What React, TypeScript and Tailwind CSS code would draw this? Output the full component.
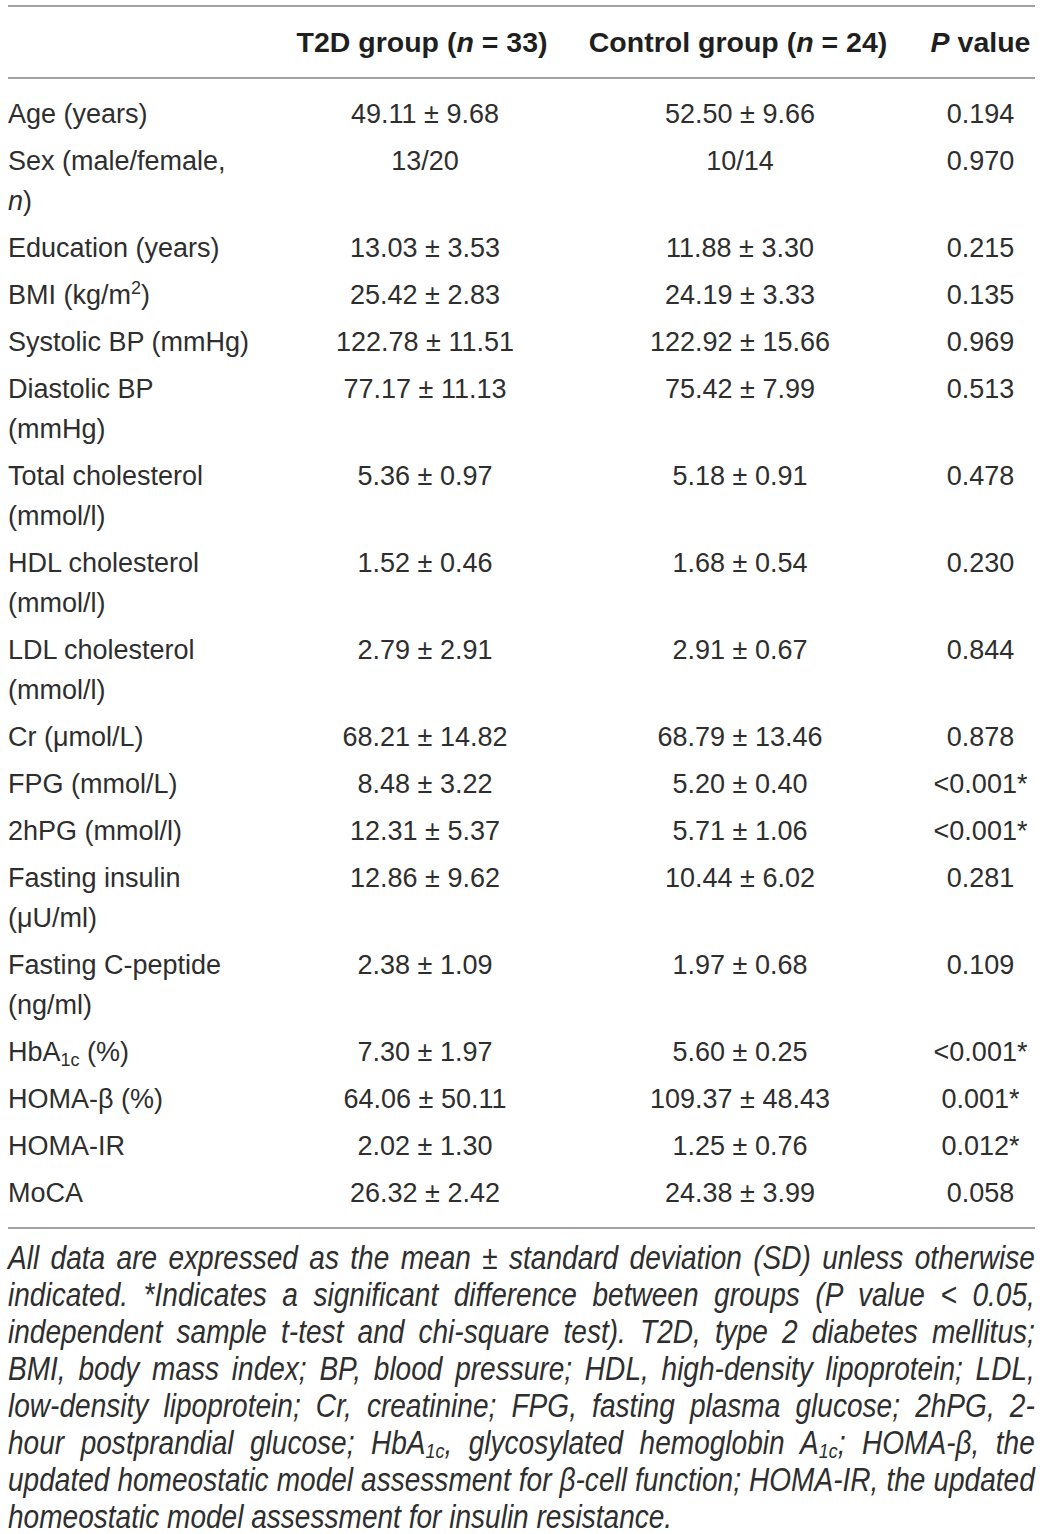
import React from "react";

type Row = { label: React.ReactNode; a: string; b: string; p: string };

const Sub = ({ children }: { children: React.ReactNode }) => (
  <sub className="text-[18px] leading-none relative top-[5px] bottom-auto">{children}</sub>
);

const rows: Row[] = [
  { label: "Age (years)", a: "49.11 ± 9.68", b: "52.50 ± 9.66", p: "0.194" },
  { label: <>Sex (male/female,<br /><i>n</i>)</>, a: "13/20", b: "10/14", p: "0.970" },
  { label: "Education (years)", a: "13.03 ± 3.53", b: "11.88 ± 3.30", p: "0.215" },
  { label: <>BMI (kg/m<sup className="text-[18px] leading-none relative top-[-10px]">2</sup>)</>, a: "25.42 ± 2.83", b: "24.19 ± 3.33", p: "0.135" },
  { label: "Systolic BP (mmHg)", a: "122.78 ± 11.51", b: "122.92 ± 15.66", p: "0.969" },
  { label: <>Diastolic BP<br />(mmHg)</>, a: "77.17 ± 11.13", b: "75.42 ± 7.99", p: "0.513" },
  { label: <>Total cholesterol<br />(mmol/l)</>, a: "5.36 ± 0.97", b: "5.18 ± 0.91", p: "0.478" },
  { label: <>HDL cholesterol<br />(mmol/l)</>, a: "1.52 ± 0.46", b: "1.68 ± 0.54", p: "0.230" },
  { label: <>LDL cholesterol<br />(mmol/l)</>, a: "2.79 ± 2.91", b: "2.91 ± 0.67", p: "0.844" },
  { label: "Cr (μmol/L)", a: "68.21 ± 14.82", b: "68.79 ± 13.46", p: "0.878" },
  { label: "FPG (mmol/L)", a: "8.48 ± 3.22", b: "5.20 ± 0.40", p: "<0.001*" },
  { label: "2hPG (mmol/l)", a: "12.31 ± 5.37", b: "5.71 ± 1.06", p: "<0.001*" },
  { label: <>Fasting insulin<br />(μU/ml)</>, a: "12.86 ± 9.62", b: "10.44 ± 6.02", p: "0.281" },
  { label: <>Fasting C-peptide<br />(ng/ml)</>, a: "2.38 ± 1.09", b: "1.97 ± 0.68", p: "0.109" },
  { label: <>HbA<Sub>1c</Sub> (%)</>, a: "7.30 ± 1.97", b: "5.60 ± 0.25", p: "<0.001*" },
  { label: "HOMA-β (%)", a: "64.06 ± 50.11", b: "109.37 ± 48.43", p: "0.001*" },
  { label: "HOMA-IR", a: "2.02 ± 1.30", b: "1.25 ± 0.76", p: "0.012*" },
  { label: "MoCA", a: "26.32 ± 2.42", b: "24.38 ± 3.99", p: "0.058" },
];

const FSub = ({ children }: { children: React.ReactNode }) => (
  <sub className="text-[21px] leading-none relative top-[4px] bottom-auto">{children}</sub>
);

const footLines: React.ReactNode[] = [
  "All data are expressed as the mean ± standard deviation (SD) unless otherwise",
  "indicated. *Indicates a significant difference between groups (P value < 0.05,",
  "independent sample t-test and chi-square test). T2D, type 2 diabetes mellitus;",
  "BMI, body mass index; BP, blood pressure; HDL, high-density lipoprotein; LDL,",
  "low-density lipoprotein; Cr, creatinine; FPG, fasting plasma glucose; 2hPG, 2-",
  <>hour postprandial glucose; HbA<FSub>1c</FSub>, glycosylated hemoglobin A<FSub>1c</FSub>; HOMA-β, the</>,
  "updated homeostatic model assessment for β-cell function; HOMA-IR, the updated",
];

export default function App() {
  return (
    <div
      className="w-[1043px] bg-white text-[#2e2e2e] px-[8px]"
      style={{ fontFamily: "'Liberation Sans', Arial, sans-serif" }}
    >
      <div className="h-[5px]" />
      <div className="border-t-2 border-[#a3a3a3]" />
      <div className="grid grid-cols-[282px_270px_360px_1fr] h-[70px] items-center text-[28.5px] font-bold whitespace-nowrap text-[#1f1f1f]">
        <div />
        <div className="text-center pr-[6px]">T2D group (<i>n</i> = 33)</div>
        <div className="text-center pr-[4px]">Control group (<i>n</i> = 24)</div>
        <div className="text-center pl-[6px]"><i>P</i> value</div>
      </div>
      <div className="border-t-2 border-[#a3a3a3]" />
      <div className="pt-[11px] pb-[11px] text-[27px] leading-[40px] whitespace-nowrap">
        {rows.map((r, i) => (
          <div key={i} className="grid grid-cols-[282px_270px_360px_1fr] pt-[4px] pb-[3px]">
            <div>{r.label}</div>
            <div className="text-center">{r.a}</div>
            <div className="text-center">{r.b}</div>
            <div className="text-center pl-[6px]">{r.p}</div>
          </div>
        ))}
      </div>
      <div className="border-t-2 border-[#a3a3a3]" />
      <div className="pt-[10px] text-[33px] italic leading-[37px] whitespace-nowrap">
        {footLines.map((l, i) => (
          <div key={i} className="w-[1027px]">
            <div className="w-[1208px] origin-left scale-x-[0.85] text-justify [text-align-last:justify]">{l}</div>
          </div>
        ))}
        <div className="w-[1027px]">
          <div className="w-[1208px] origin-left scale-x-[0.85]">homeostatic model assessment for insulin resistance.</div>
        </div>
      </div>
      <div className="h-[10px]" />
    </div>
  );
}
